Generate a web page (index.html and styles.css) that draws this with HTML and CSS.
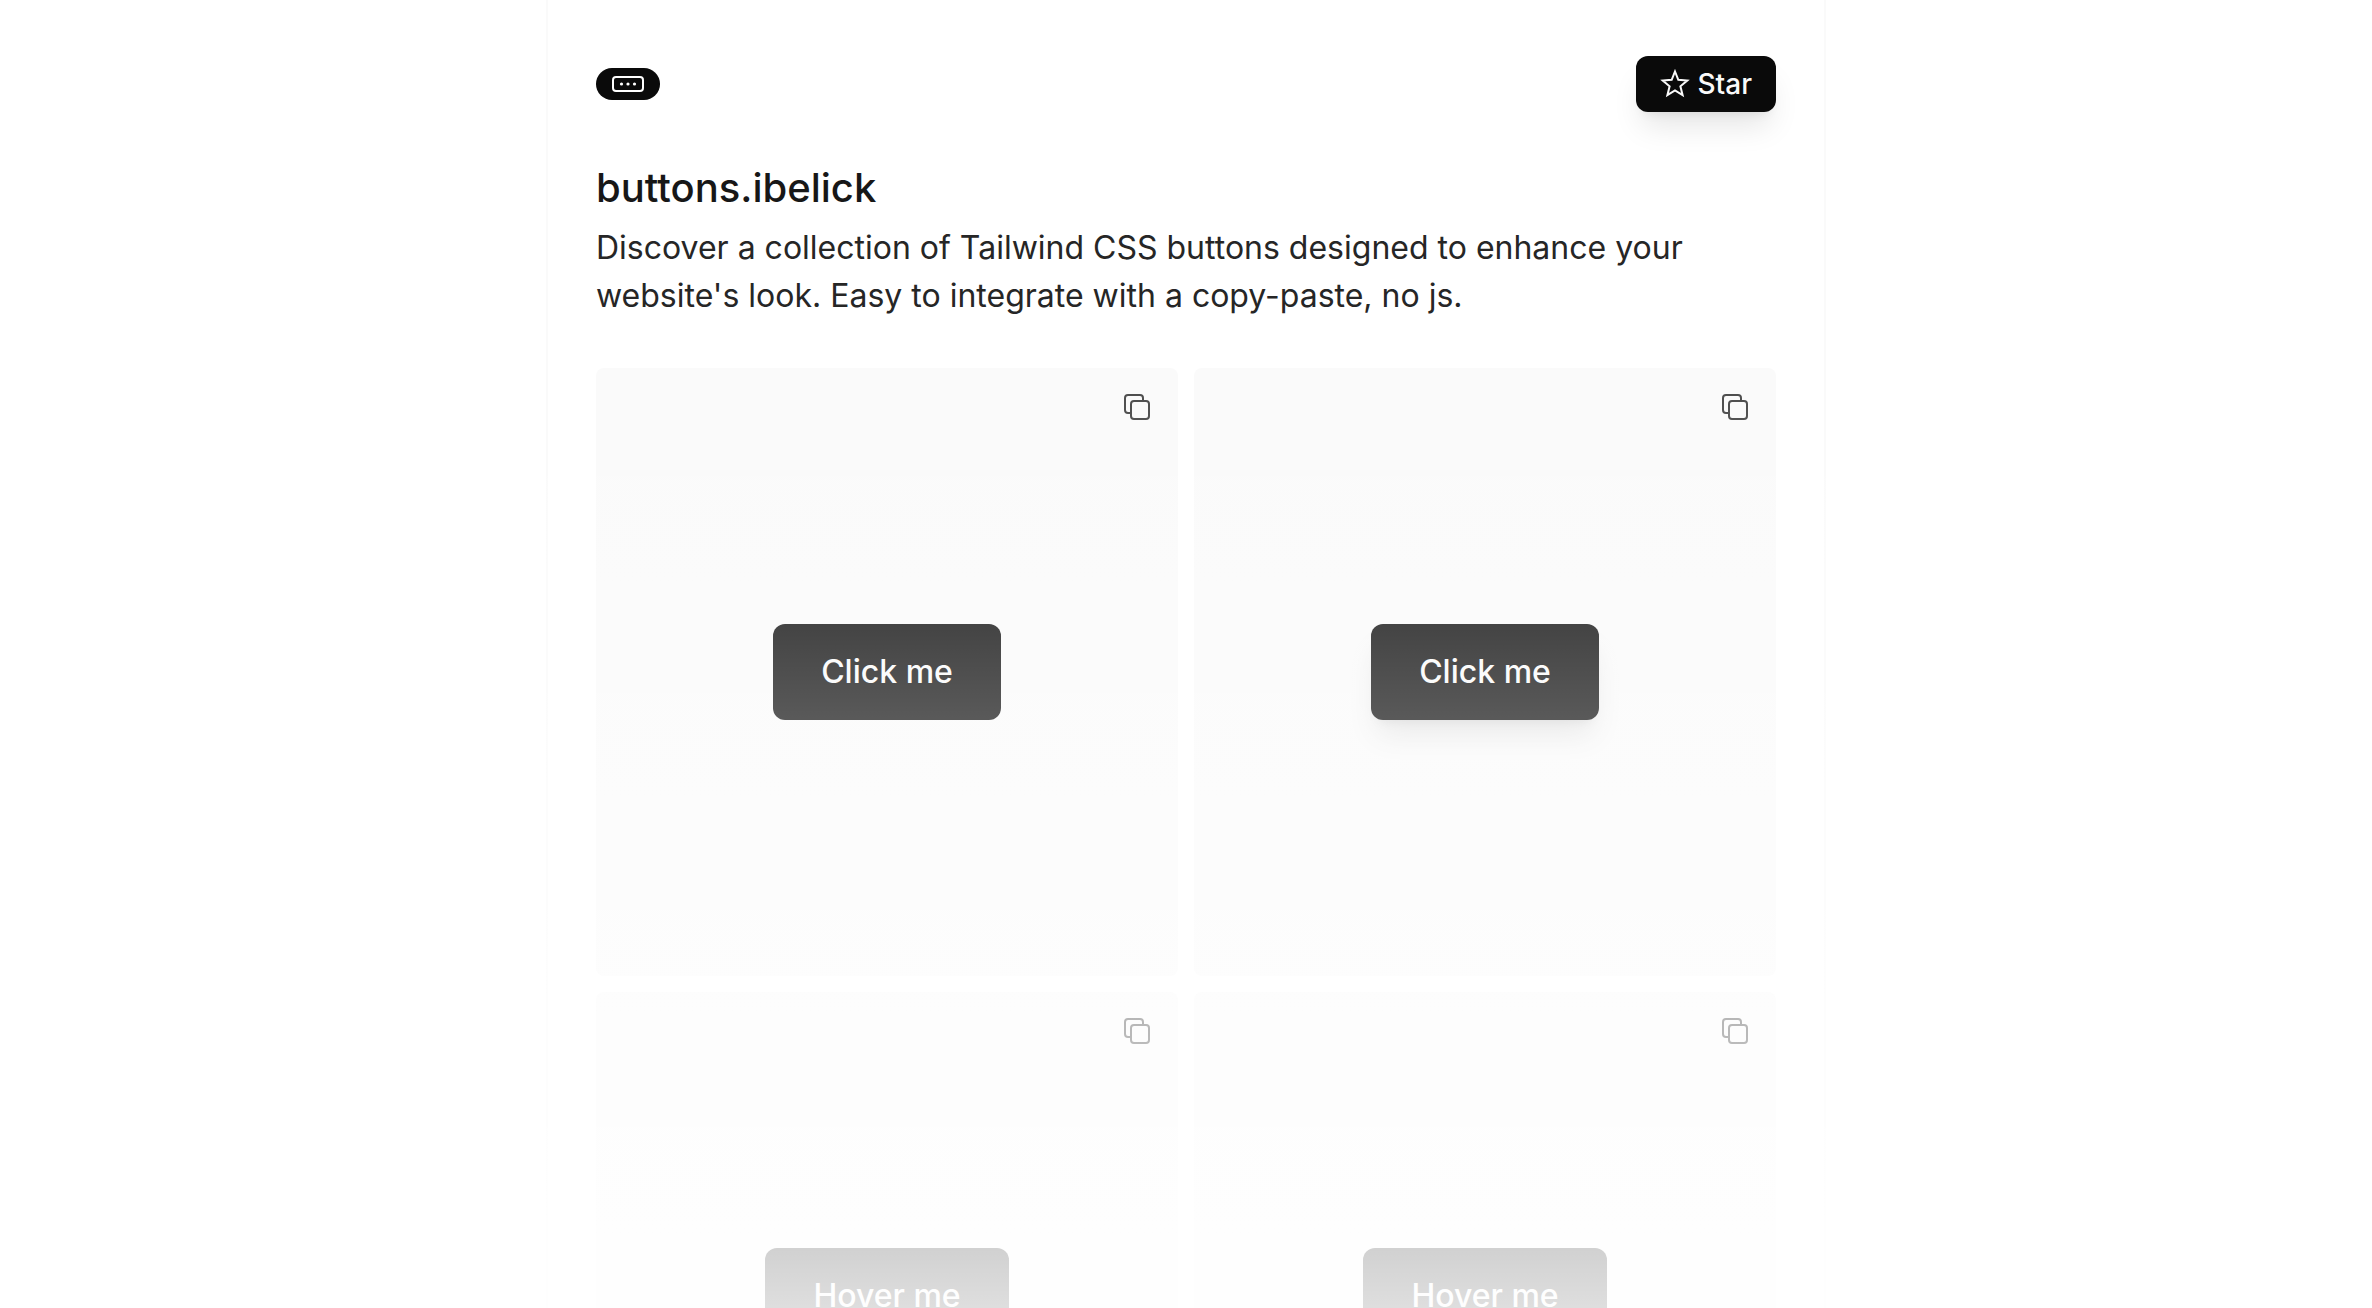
FILE: index.html
```html
<!DOCTYPE html>
<html lang="en">
<head>
<meta charset="utf-8">
<meta name="viewport" content="width=device-width, initial-scale=1">
<title>buttons.ibelick</title>
<link rel="stylesheet" href="styles.css">
</head>
<body>
<svg class="sprite" aria-hidden="true">
  <symbol id="copy" viewBox="0 0 26 26">
    <path d="M7 19H4a3 3 0 0 1-3-3V4a3 3 0 0 1 3-3h12a3 3 0 0 1 3 3v3" fill="none" stroke="currentColor" stroke-width="2"/>
    <rect x="7" y="7" width="18" height="18" rx="3" fill="none" stroke="currentColor" stroke-width="2"/>
  </symbol>
</svg>
<main class="page">
  <header class="header">
    <a class="logo" href="#" aria-label="Home">
      <svg width="32" height="16" viewBox="0 0 32 16" aria-hidden="true">
        <rect x="1" y="1" width="30" height="14" rx="3" fill="none" stroke="currentColor" stroke-width="2"/>
        <circle cx="9.500" cy="8" r="1.600" fill="currentColor"/>
        <circle cx="16" cy="8" r="1.600" fill="currentColor"/>
        <circle cx="22.500" cy="8" r="1.600" fill="currentColor"/>
      </svg>
    </a>
    <a class="star" href="#">
      <svg width="30" height="30" viewBox="0 0 30 30" aria-hidden="true">
        <path d="M15 2.500l3.300 8.300 9 .7-6.900 5.800 2.200 8.900-7.600-4.800-7.600 4.800 2.200-8.900-6.900-5.800 9-.7z" fill="none" stroke="currentColor" stroke-width="2"/>
      </svg>
      Star
    </a>
  </header>
  <h1 class="title">buttons.ibelick</h1>
  <p class="intro">Discover a collection of Tailwind CSS buttons designed to enhance your website's look. Easy to integrate with a copy-paste, no js.</p>
  <section class="grid">
    <article class="card">
      <button class="copy" type="button" aria-label="Copy code"><svg class="copy-icon"><use href="#copy"/></svg></button>
      <button class="demo" type="button">Click me</button>
    </article>
    <article class="card">
      <button class="copy" type="button" aria-label="Copy code"><svg class="copy-icon"><use href="#copy"/></svg></button>
      <button class="demo raised" type="button">Click me</button>
    </article>
    <article class="card">
      <button class="copy" type="button" aria-label="Copy code"><svg class="copy-icon"><use href="#copy"/></svg></button>
      <button class="demo" type="button">Hover me</button>
    </article>
    <article class="card">
      <button class="copy" type="button" aria-label="Copy code"><svg class="copy-icon"><use href="#copy"/></svg></button>
      <button class="demo" type="button">Hover me</button>
    </article>
  </section>
</main>
</body>
</html>
```
FILE: styles.css
```css
* {
  box-sizing: border-box;
  margin: 0;
}

body {
  height: 100vh;
  overflow: hidden;
  background: #fff;
  color: #171717;
  font-family: Inter, "Liberation Sans", sans-serif;
  -webkit-font-smoothing: antialiased;
}

.sprite {
  display: none;
}

.page {
  max-width: 1280px;
  margin: 0 auto;
  padding: 56px 48px;
  border: solid #fafafa;
  border-width: 0 2px;
}

.header {
  display: flex;
  align-items: center;
  justify-content: space-between;
}

.logo {
  display: flex;
  padding: 8px 16px;
  border-radius: 16px;
  background: #0a0a0a;
  color: #fff;
}

.star {
  display: flex;
  align-items: center;
  gap: 8px;
  padding: 0 24px;
  border-radius: 12px;
  background: #0a0a0a;
  color: #fafafa;
  font-size: 28px;
  font-weight: 500;
  line-height: 56px;
  text-decoration: none;
  box-shadow: 0 20px 30px -6px rgba(0, 0, 0, 0.1), 0 8px 12px -8px rgba(0, 0, 0, 0.1);
}

.title {
  margin-top: 48px;
  font-size: 40px;
  font-weight: 500;
  line-height: 56px;
}

.intro {
  margin-top: 8px;
  color: #262626;
  font-size: 32px;
  line-height: 48px;
}

.grid {
  position: relative;
  display: grid;
  grid-template-columns: 1fr 1fr;
  gap: 16px;
  margin-top: 48px;
}

/* Fades the gallery and the page borders out to white */
.grid::after {
  content: "";
  position: absolute;
  inset: 0 -50px;
  background: linear-gradient(rgba(255, 255, 255, 0), #fff 1084px);
  pointer-events: none;
}

.card {
  position: relative;
  display: flex;
  align-items: center;
  justify-content: center;
  min-height: 608px;
  border-radius: 8px;
  background: #fafafa;
}

.copy {
  position: absolute;
  top: 26px;
  right: 28px;
  display: flex;
  padding: 0;
  border: 0;
  background: none;
  color: #4a4a4a;
}

.copy-icon {
  width: 26px;
  height: 26px;
}

.demo {
  padding: 0 48px;
  border: 0;
  border-radius: 12px;
  background: #0a0a0a;
  color: #fafafa;
  font: 500 32px/96px Inter, "Liberation Sans", sans-serif;
}

.raised {
  box-shadow: 0 20px 30px -6px rgba(0, 0, 0, 0.1), 0 8px 12px -8px rgba(0, 0, 0, 0.1);
}
```
